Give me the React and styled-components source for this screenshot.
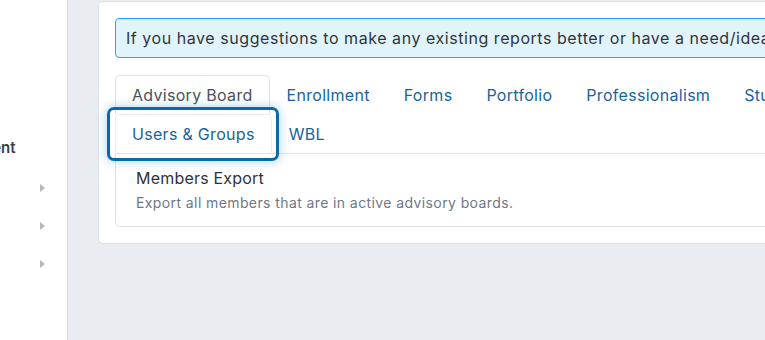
import styled, { createGlobalStyle } from "styled-components";

const GlobalStyle = createGlobalStyle`
  html, body {
    margin: 0;
    padding: 0;
    overflow: hidden;
    background: #e9edf2;
    font-family: "Inter", "Liberation Sans", sans-serif;
  }
  * { box-sizing: border-box; }
`;

const Layout = styled.div`
  display: flex;
  width: 1400px;
  height: 340px;
`;

const Sidebar = styled.aside`
  width: 68px;
  flex: none;
  background: #fff;
  border-right: 1px solid #d3d8de;
  overflow: hidden;
  padding-top: 137px;
`;

const SectionTitle = styled.div`
  white-space: nowrap;
  margin-left: -74px;
  margin-bottom: 10px;
  font-size: 15px;
  font-weight: 600;
  line-height: 22px;
  color: #3a3f45;
`;

const MenuItem = styled.div`
  height: 38px;
  display: flex;
  align-items: center;
  justify-content: flex-end;
  padding-right: 22px;
`;

const Caret = styled.span`
  width: 0;
  height: 0;
  border-top: 4px solid transparent;
  border-bottom: 4px solid transparent;
  border-left: 5px solid #b3b8be;
`;

const Main = styled.main`
  flex: 1;
  padding: 1px 0 0 30px;
`;

const Card = styled.section`
  width: 1100px;
  background: #fff;
  border: 1px solid #dde2e7;
  border-radius: 5px;
  padding: 16px;
`;

const Alert = styled.div`
  background: #e1f4fc;
  border: 1px solid #1eaaf1;
  border-radius: 4px;
  padding: 7px 10px;
  font-size: 16px;
  line-height: 24px;
  letter-spacing: 0.55px;
  color: #30343a;
  white-space: nowrap;
`;

const TabNav = styled.nav`
  margin-top: 17px;
  width: 800px;
  display: flex;
  flex-wrap: wrap;
  border-bottom: 1px solid #dee2e6;
`;

const Tab = styled.button`
  position: relative;
  margin-bottom: -1px;
  padding: 8px 16px;
  font: inherit;
  font-size: 16px;
  line-height: 22px;
  letter-spacing: 0.3px;
  background: ${(p) => (p.$active || p.$focused ? "#fff" : "transparent")};
  color: ${(p) => (p.$active ? "#4d5157" : "#1a62a0")};
  border: 1px solid ${(p) => (p.$active ? "#dee2e6" : p.$focused ? "#e9ecef" : "transparent")};
  border-bottom-color: ${(p) => (p.$focused ? "#dee2e6" : "transparent")};
  border-radius: 5px 5px 0 0;
  cursor: pointer;

  ${(p) =>
    p.$focused &&
    `
    &::after {
      content: "";
      position: absolute;
      top: -8px;
      bottom: -8px;
      left: -9px;
      right: -8px;
      border: 3px solid #0b68a9;
      border-radius: 7px;
      box-shadow: 0 0 10px 2px rgba(90, 160, 215, 0.35);
      pointer-events: none;
    }
  `}
`;

const ListItem = styled.div`
  border: 1px solid #dee2e6;
  border-top: none;
  border-radius: 0 0 5px 5px;
  padding: 12px 20px 13px;
`;

const ItemTitle = styled.div`
  font-size: 16px;
  line-height: 24px;
  letter-spacing: 0.2px;
  color: #2f3338;
`;

const ItemText = styled.div`
  margin-top: 3px;
  font-size: 14px;
  line-height: 20px;
  letter-spacing: 0.4px;
  color: #6f7886;
`;

const tabs = [
  "Advisory Board",
  "Enrollment",
  "Forms",
  "Portfolio",
  "Professionalism",
  "Students",
  "Users & Groups",
  "WBL",
];

export default function App() {
  return (
    <>
      <GlobalStyle />
      <Layout>
        <Sidebar>
          <SectionTitle>Assessment</SectionTitle>
          <MenuItem><Caret /></MenuItem>
          <MenuItem><Caret /></MenuItem>
          <MenuItem><Caret /></MenuItem>
        </Sidebar>
        <Main>
          <Card>
            <Alert>
              If you have suggestions to make any existing reports better or have a need/idea for a new report, please let us know.
            </Alert>
            <TabNav>
              {tabs.map((t) => (
                <Tab
                  key={t}
                  $active={t === "Advisory Board"}
                  $focused={t === "Users & Groups"}
                >
                  {t}
                </Tab>
              ))}
            </TabNav>
            <ListItem>
              <ItemTitle>Members Export</ItemTitle>
              <ItemText>Export all members that are in active advisory boards.</ItemText>
            </ListItem>
          </Card>
        </Main>
      </Layout>
    </>
  );
}
